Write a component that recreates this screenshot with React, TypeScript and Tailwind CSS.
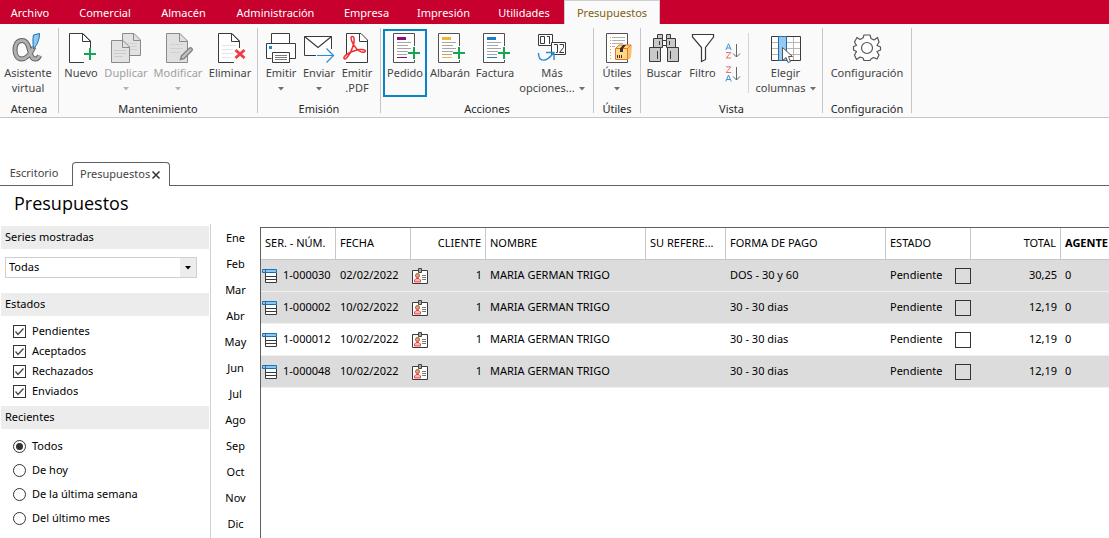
import { useState } from "react";
import type { ReactNode } from "react";

const menu = [
  { name: "Comercial", width: "w-[82px]" },
  { name: "Almacén", width: "w-[75px]" },
  { name: "Administración", width: "w-[109px]" },
  { name: "Empresa", width: "w-[73px]" },
  { name: "Impresión", width: "w-[81px]" },
  { name: "Utilidades", width: "w-[80px]" },
];
const months = ["Ene", "Feb", "Mar", "Abr", "May", "Jun", "Jul", "Ago", "Sep", "Oct", "Nov", "Dic"];
const rows = [
  { num: "1-000030", date: "02/02/2022", pay: "DOS - 30 y 60", total: "30,25", dark: true },
  { num: "1-000002", date: "10/02/2022", pay: "30 - 30 dias", total: "12,19", dark: true },
  { num: "1-000012", date: "10/02/2022", pay: "30 - 30 dias", total: "12,19", dark: false },
  { num: "1-000048", date: "10/02/2022", pay: "30 - 30 dias", total: "12,19", dark: true },
];

const Icon = ({ children }: { children: ReactNode }) => (
  <svg width="32" height="32" viewBox="0 0 32 32" fill="none" className="block shrink-0">
    {children}
  </svg>
);

const alphaBowl = "M10 7.500C14.500 7.500 16 11 17 15.500L19 22C20.500 27 25.500 27.500 27.500 22.500M10 7.500C5 7.500 3 12 3 17C3 22 5.500 26 9.500 26C14.500 26 19 20 22 14";

const AlphaIcon = () => (
  <Icon>
    <path d={alphaBowl} stroke="#626262" strokeWidth="5" />
    <path d={alphaBowl} stroke="#b0b0b0" strokeWidth="3" />
    <path d="M21.500 2L27.500 .5C27.500 7 25 12 21.500 16C21 11 20.500 6 21.500 2Z" fill="#8cc8f2" stroke="#1c6fb0" />
  </Icon>
);

const NewIcon = () => (
  <Icon>
    <path d="M19 29.500H4.500V.5H18L25.500 8V18" fill="#fff" stroke="#3a3a3a" />
    <path d="M17.500 .5V8.500H25.500Z" fill="#fff" stroke="#3a3a3a" />
    <path d="M25 15V27M19 21H31" stroke="#17a552" strokeWidth="2" />
  </Icon>
);

const CopyIcon = () => (
  <Icon>
    <path d="M12.500 .5H24L30.500 7V22.500H12.500Z" fill="#e2e2e2" stroke="#8a8a8a" />
    <path d="M23.500 .5V7.500H30.500" stroke="#8a8a8a" />
    <path d="M15 10.500H27M15 13.500H27M15 16.500H27" stroke="#d0d0d0" />
    <path d="M1.500 7.500H13L19.500 14V29.500H1.500Z" fill="#e2e2e2" stroke="#8a8a8a" />
    <path d="M12.500 7.500V14.500H19.500" stroke="#8a8a8a" />
    <path d="M4 17.500H16M4 20.500H16M4 23.500H13" stroke="#cbcbcb" />
  </Icon>
);

const EditIcon = () => (
  <Icon>
    <path d="M4.500 .5H18L25.500 8V29.500H4.500Z" fill="#e0e0e0" stroke="#8a8a8a" />
    <path d="M17.500 .5V8.500H25.500" stroke="#8a8a8a" />
    <path d="M8 11.500H21M8 15.500H21M8 19.500H18" stroke="#d0d0d0" />
    <path d="M18.500 26.500L19.500 23L27.500 15C29 14 31 16 30 17.500L22 25.500Z" fill="#c4c4c4" stroke="#858585" strokeWidth="1.500" />
  </Icon>
);

const DeleteIcon = () => (
  <Icon>
    <path d="M20 29.500H4.500V.5H18L25.500 8V15" fill="#fff" stroke="#3a3a3a" />
    <path d="M17.500 .5V8.500H25.500Z" fill="#fff" stroke="#3a3a3a" />
    <path d="M8 12.500H22M8 16.500H19M8 20.500H19M8 24.500H17" stroke="#e4e4e4" />
    <path d="M21.500 17L30.500 25M30.500 17L21.500 25" stroke="#ef3e42" strokeWidth="3" />
  </Icon>
);

const PrinterIcon = () => (
  <Icon>
    <path d="M6.500 10.500V.5H24.500V10.500" fill="#fff" stroke="#3a3a3a" />
    <path d="M6.500 25.500H1.500V10.500H30.500V25.500H24.500" fill="#fff" stroke="#3a3a3a" />
    <path d="M7.500 19.500H24.500V29.500H7.500Z" fill="#fff" stroke="#3a3a3a" />
    <path d="M10 22.500H22M10 24.500H22M10 26.500H22" stroke="#777" />
    <path d="M4 13H7V16H4Z" fill="#2186cf" />
  </Icon>
);

const MailIcon = () => (
  <Icon>
    <path d="M13 22.500H1.500V3.500H28.500V16" fill="#fff" stroke="#3a3a3a" />
    <path d="M1.500 3.500L15 14.500L28.500 3.500" stroke="#3a3a3a" strokeWidth="1.200" />
    <path d="M14 22.500H30M23.500 15.500L30.500 22.500L23.500 29.500" stroke="#2a8bd3" strokeWidth="1.200" />
  </Icon>
);

const PdfIcon = () => (
  <Icon>
    <path d="M5 29.500H26.500V7L20 .5H5.500V21" fill="#fff" stroke="#3a3a3a" />
    <path d="M18.500 .5V8.500H26.500" stroke="#3a3a3a" />
    <path d="M11 3.500C13.500 3 13.500 8 12.500 11.500C11 16.500 8 22.500 5.500 25C3.500 27 2 25.500 3.500 23.500C6 20.500 13 17.500 18.500 16.500C24 16 25.500 18 23.500 19C21 20 17 17.500 14.500 14.500C11.500 11 8.500 4.500 11 3.500Z" stroke="#f02f32" strokeWidth="1.500" />
  </Icon>
);

const DocIcon = ({ color }: { color: string }) => (
  <Icon>
    <path d="M25.500 13V.5H4.500V29.500H25.500V27" fill="#fff" stroke="#505050" />
    <path d="M8 4H17V7H8Z" fill={color} />
    <path d="M8 9.500H22M8 12.500H19M8 15.500H22M8 18.500H19M8 21.500H18" stroke="#a5a5a5" />
    <path d="M8 24.500H18" stroke={color} />
    <path d="M25 14V26M19 20H31" stroke="#17a552" strokeWidth="2" />
  </Icon>
);

const NumbersIcon = () => (
  <Icon>
    <path d="M2.500 1.500H16.500V12.500H2.500Z" fill="#fff" stroke="#3a3a3a" />
    <path d="M4.500 3.500H8.500V10.500H4.500ZM11 3.500H13.500V11" stroke="#3a3a3a" />
    <path d="M15.500 9.500H29.500V21.500H15.500Z" fill="#fff" stroke="#3a3a3a" />
    <path d="M18 11.500H21.500V19.500H20M23.500 11.500H27.500V14.500L23.500 19.500H28" stroke="#3a3a3a" />
    <path d="M2.500 20C2.500 29 10 30 17.500 20M10 19.500H18V27" stroke="#2a8bd3" strokeWidth="1.400" />
  </Icon>
);

const ToolsIcon = () => (
  <Icon>
    <path d="M5.500 .5H26.500V29.500H5.500Z" fill="#fff" stroke="#505050" />
    <path d="M11 4.500H24M11 7.500H24M11 10.500H22M11 13.500H14" stroke="#b0b0b0" />
    <path d="M9.500 4V27" stroke="#f19a26" strokeDasharray="1 2" />
    <path d="M14.500 15.500L18 12H30L29.500 24L26.500 26.500H14.500Z" fill="#ffd889" stroke="#e8761f" />
    <path d="M26.500 15.500L30 12V24L26.500 26.500Z" fill="#fbc06a" />
    <path d="M14.500 15.500H26.500V26.500M26.500 15.500L30 12" stroke="#e8761f" />
    <path d="M19 15.500L22 12H25L22 15.500V19H19Z" fill="#333" />
    <path d="M16.500 22V25M18.500 22V25M20.500 22V25" stroke="#333" />
  </Icon>
);

const BinocularsIcon = () => (
  <Icon>
    <g fill="#c9c9c9" stroke="#3a3a3a">
      <path d="M9.500 1.500H14.500V5.500H9.500ZM18.500 1.500H22.500V5.500H18.500Z" />
      <path d="M5.500 5.500H14.500V14.500H5.500ZM18.500 5.500H27.500V14.500H18.500Z" />
      <path d="M14.500 7.500H18.500V12.500H14.500Z" fill="#fff" />
      <path d="M1.500 14.500H12.500V28.500H1.500ZM19.500 14.500H30.500V28.500H19.500Z" />
      <path d="M9.500 18V26M22.500 18V26M11.500 8V12M21.500 8V12" />
    </g>
  </Icon>
);

const FunnelIcon = () => (
  <Icon>
    <path d="M5.500 1.500H26.500V4L18.500 14.500V26.500L14.500 28.500V14.500L5.500 4Z" fill="#fff" stroke="#3a3a3a" strokeWidth="1.200" />
  </Icon>
);

const ColumnsIcon = () => (
  <Icon>
    <path d="M1.500 3.500H30.500V27.500H1.500Z" fill="#fff" stroke="#3a3a3a" />
    <path d="M2 9.500H30M2 15.500H30M2 21.500H30M23.500 4V27" stroke="#b5b5b5" />
    <path d="M8.500 3.500H16.500V27.500H8.500Z" fill="#95c9f0" stroke="#1c6fb0" />
    <path d="M12.500 14.500L22.500 23.500H18.500L20.500 28.500L18 29.500L16 24.500L12.500 27.500Z" fill="#fff" stroke="#555" />
  </Icon>
);

const GearIcon = () => (
  <Icon>
    <path d="M12 5L13 2H19L20 5.500L23 7L26.500 4.500L28 9L26 12.500L29.500 14V17L26 18.500L28 22L26 26L22.500 24.500L20 26L19 27.500H13L12 25L9 24L5.500 26.500L3.500 22L5.500 18.500L2.500 17V13.500L5.500 12.500L3.500 9L6 4.500L9 6.500Z" fill="#fff" stroke="#555" strokeWidth="1.200" strokeLinejoin="round" />
    <circle cx="16" cy="15" r="5.500" fill="#fff" stroke="#555" strokeWidth="1.200" />
  </Icon>
);

const SortIcon = ({ desc }: { desc?: boolean }) => (
  <svg width="16" height="16" viewBox="0 0 16 16" fill="none" className="block">
    <path d={desc ? "M.8 15.500L3.500 9L6.200 15.500M1.800 13.500H5.200" : "M.8 7L3.500 .8L6.200 7M1.800 5H5.200"} stroke="#3f97d3" />
    <path d={desc ? "M1 .8H5.800L1.200 6.500H6.200" : "M1 9.500H5.800L1.200 15H6.200"} stroke="#ee6c70" />
    <path d="M11.500 1V14M8 10.500L11.500 14L15 10.500" stroke="#666" />
  </svg>
);

const RowIcon = () => (
  <svg width="16" height="14" viewBox="0 0 16 14" fill="none" className="block shrink-0">
    <path d="M3.500 4V13.500H14.500V4M4 7.500H14M4 10.500H14" stroke="#3a3a3a" fill="#fff" />
    <path d="M.5 .5H14.500V3.500H.5ZM3.500 .5V3.500" fill="#8cc8f2" stroke="#1c6fb0" />
  </svg>
);

const CardIcon = () => (
  <svg width="16" height="16" viewBox="0 0 16 16" fill="none" className="block shrink-0">
    <path d="M.5 2.500H15.500V15.500H.5Z" fill="#fff" stroke="#3a3a3a" />
    <path d="M6.500 .5H9.500V4.500H6.500Z" fill="#aaa" stroke="#444" />
    <path d="M2.500 14V12L4 10.500H7L8.500 12V14Z" fill="#ffb5b8" stroke="#e6484d" />
    <circle cx="5.500" cy="7.500" r="2" fill="#e5a07a" stroke="#a65a2e" />
    <path d="M10 7.500H14M10 9.500H14M10 11.500H14" stroke="#777" />
  </svg>
);

const Caret = ({ light }: { light?: boolean }) => (
  <svg width="6" height="4" viewBox="0 0 6 4" className="mt-0.5 inline-block shrink-0">
    <path d="M0 0H6L3 3.500Z" fill={light ? "#b5b5b5" : "#707070"} />
  </svg>
);

type ToolProps = {
  icon: ReactNode;
  label: string;
  second?: string;
  caret?: boolean;
  width: string;
  disabled?: boolean;
  active?: boolean;
};

const Tool = ({ icon, label, second, caret, width, disabled, active }: ToolProps) => (
  <button
    type="button"
    disabled={disabled}
    className={`flex h-[68px] shrink-0 flex-col items-center border-2 pt-0.5 leading-[15px] whitespace-nowrap ${width} ${
      active ? "border-[#0a84c8]" : "border-transparent"
    } ${disabled ? "text-[#a0a0a0]" : "text-[#444]"}`}
  >
    {icon}
    <span>{label}</span>
    {(second || caret) && (
      <span className="flex h-[15px] items-center justify-center gap-1">
        {second}
        {caret && <Caret light={disabled} />}
      </span>
    )}
  </button>
);

const Group = ({ name, width, children }: { name: string; width: string; children: ReactNode }) => (
  <>
    <div className={`flex shrink-0 flex-col items-center pt-[5px] pb-px ${width}`}>
      <div className="flex">{children}</div>
      <div className="mt-1 leading-[15px] text-[#262626]">{name}</div>
    </div>
    <div className="mt-1 h-[85px] w-px shrink-0 bg-[#c6c6c6]" />
  </>
);

const Heading = ({ children }: { children: ReactNode }) => (
  <h2 className="ml-px flex h-[23px] items-center bg-[#ececec] pl-1">{children}</h2>
);

const App = () => {
  const [states, setStates] = useState(["Pendientes", "Aceptados", "Rechazados", "Enviados"]);
  const [recent, setRecent] = useState("Todos");
  const toggle = (name: string) =>
    setStates(states.includes(name) ? states.filter((s) => s !== name) : [...states, name]);

  return (
    <div className="flex h-screen w-full flex-col overflow-hidden bg-white font-['Noto_Sans',sans-serif] text-[11px] text-black">
      <nav className="flex h-6 shrink-0 bg-[#c8002d] text-white">
        <button type="button" className="h-[25px] w-16 shrink-0 bg-[#c8002d] pr-1 pt-0.5">
          Archivo
        </button>
        {menu.map((m) => (
          <button key={m.name} type="button" className={`shrink-0 pt-0.5 text-center ${m.width}`}>
            {m.name}
          </button>
        ))}
        <button type="button" className="h-[25px] w-24 shrink-0 border border-b-0 border-[#d0d0d0] bg-[#fafafa] text-[#7d5f12]">
          Presupuestos
        </button>
      </nav>

      <div className="flex shrink-0 border-b border-[#c6c6c6] bg-[#fafafa]">
        <Group name="Atenea" width="w-[58px]">
          <Tool icon={<AlphaIcon />} label="Asistente" second="virtual" width="mr-0.5 w-14" />
        </Group>
        <Group name="Mantenimiento" width="w-[198px]">
          <Tool icon={<NewIcon />} label="Nuevo" width="w-10" />
          <Tool icon={<CopyIcon />} label="Duplicar" caret disabled width="w-[50px]" />
          <Tool icon={<EditIcon />} label="Modificar" caret disabled width="w-[54px]" />
          <Tool icon={<DeleteIcon />} label="Eliminar" width="w-[50px]" />
        </Group>
        <Group name="Emisión" width="w-[122px]">
          <Tool icon={<PrinterIcon />} label="Emitir" caret width="w-[38px]" />
          <Tool icon={<MailIcon />} label="Enviar" caret width="w-[38px]" />
          <Tool icon={<PdfIcon />} label="Emitir" second=".PDF" width="w-[38px]" />
        </Group>
        <Group name="Acciones" width="w-[212px]">
          <Tool icon={<DocIcon color="#8c0b7d" />} label="Pedido" active width="w-11" />
          <Tool icon={<DocIcon color="#fbb034" />} label="Albarán" width="w-[46px]" />
          <Tool icon={<DocIcon color="#1b7fc4" />} label="Factura" width="w-11" />
          <Tool icon={<NumbersIcon />} label="Más" second="opciones..." caret width="mr-1 w-[70px]" />
        </Group>
        <Group name="Útiles" width="w-[46px]">
          <Tool icon={<ToolsIcon />} label="Útiles" caret width="w-10" />
        </Group>
        <Group name="Vista" width="w-[181px]">
          <Tool icon={<BinocularsIcon />} label="Buscar" width="w-[46px]" />
          <Tool icon={<FunnelIcon />} label="Filtro" width="w-[31px]" />
          <div className="flex w-[30px] flex-col items-center gap-[7px] pt-3.5">
            <button type="button" aria-label="Orden ascendente">
              <SortIcon />
            </button>
            <button type="button" aria-label="Orden descendente">
              <SortIcon desc />
            </button>
          </div>
          <div className="mt-1 h-[60px] w-px bg-[#d5d5d5]" />
          <Tool icon={<ColumnsIcon />} label="Elegir" second="columnas" caret width="w-[73px]" />
        </Group>
        <Group name="Configuración" width="w-[88px]">
          <Tool icon={<GearIcon />} label="Configuración" width="w-[84px]" />
        </Group>
      </div>

      <div className="mt-11 flex h-6 shrink-0 items-end text-[#444]">
        <button type="button" className="h-6 w-[72px] border-b border-[#606060] pr-1">
          Escritorio
        </button>
        <div className="flex h-6 w-[98px] items-center gap-px rounded-t-[4px] border border-b-0 border-[#606060] pl-[7px]">
          <button type="button">Presupuestos</button>
          <button type="button" aria-label="Cerrar">
            <svg width="10" height="10" viewBox="0 0 10 10" className="block">
              <path d="M1.500 1.500L8.500 8.500M8.500 1.500L1.500 8.500" stroke="#333" strokeWidth="1.500" />
            </svg>
          </button>
        </div>
        <div className="h-6 flex-1 border-b border-[#606060]" />
      </div>

      <h1 className="shrink-0 pt-[3px] pb-px pl-3.5 font-['Open_Sans',sans-serif] text-[18px] leading-[28px]">Presupuestos</h1>

      <div className="mt-1.5 flex min-h-0 flex-1">
        <aside className="w-[211px] shrink-0 border-r border-[#d0d0d0] pt-0.5">
          <div className="pr-px">
            <Heading>
              <label htmlFor="series">Series mostradas</label>
            </Heading>
            <div className="relative mt-2 ml-[5px] w-48">
              <select id="series" className="block h-[21px] w-full appearance-none border border-[#cfcfcf] bg-white pl-[3px]">
                <option>Todas</option>
              </select>
              <span className="pointer-events-none absolute inset-y-px right-px flex w-4 items-center justify-center bg-[#ececec]">
                <svg width="6" height="4" viewBox="0 0 6 4">
                  <path d="M0 0H6L3 3.500Z" fill="#000" />
                </svg>
              </span>
            </div>
            <div className="mt-[15px]">
              <Heading>Estados</Heading>
            </div>
            <div className="mt-[5px] ml-[13px]">
              {["Pendientes", "Aceptados", "Rechazados", "Enviados"].map((name) => (
                <label key={name} className="flex h-5 items-center gap-1.5">
                  <span className="grid">
                    <input
                      type="checkbox"
                      checked={states.includes(name)}
                      onChange={() => toggle(name)}
                      className="peer col-start-1 row-start-1 h-[13px] w-[13px] appearance-none border border-[#333] bg-white"
                    />
                    <svg width="13" height="13" viewBox="0 0 13 13" fill="none" className="pointer-events-none invisible col-start-1 row-start-1 peer-checked:visible">
                      <path d="M2.500 6.500L5 9.500L10.500 3.500" stroke="#444" strokeWidth="1.300" />
                    </svg>
                  </span>
                  {name}
                </label>
              ))}
            </div>
            <div className="mt-[5px]">
              <Heading>Recientes</Heading>
            </div>
            <div className="mt-[5px] ml-[13px]">
              {["Todos", "De hoy", "De la última semana", "Del último mes"].map((name) => (
                <label key={name} className="flex h-6 items-center gap-1.5">
                  <input
                    type="radio"
                    name="recent"
                    checked={recent === name}
                    onChange={() => setRecent(name)}
                    className="grid h-[13px] w-[13px] appearance-none place-items-center rounded-full border border-[#333] bg-white before:h-[7px] before:w-[7px] before:rounded-full checked:before:bg-[#333]"
                  />
                  {name}
                </label>
              ))}
            </div>
          </div>
        </aside>

        <div className="flex w-[49px] shrink-0 flex-col pt-px">
          {months.map((m) => (
            <button key={m} type="button" className="h-[26px] shrink-0">
              {m}
            </button>
          ))}
        </div>

        <div className="mt-[3px] min-w-0 flex-1 overflow-hidden border-t border-l border-[#606060]">
          <table className="w-full table-fixed border-separate border-spacing-0 whitespace-nowrap">
            <colgroup>
              <col className="w-[75px]" />
              <col className="w-[75px]" />
              <col className="w-[75px]" />
              <col className="w-[160px]" />
              <col className="w-20" />
              <col className="w-[160px]" />
              <col className="w-[85px]" />
              <col className="w-[90px]" />
              <col />
            </colgroup>
            <thead>
              <tr className="h-8 text-left [&>th]:border-b [&>th]:border-[#c6c6c6] [&>th]:px-1 [&>th]:py-0 [&>th]:font-normal [&>th:not(:last-child)]:border-r">
                <th>SER. - NÚM.</th>
                <th>FECHA</th>
                <th className="text-right">CLIENTE</th>
                <th>NOMBRE</th>
                <th>SU REFERE...</th>
                <th>FORMA DE PAGO</th>
                <th>ESTADO</th>
                <th className="text-right">TOTAL</th>
                <th>
                  <b>AGENTE</b>
                </th>
              </tr>
            </thead>
            <tbody>
              {rows.map((r) => (
                <tr key={r.num} className={`h-8 [&>td]:border-b [&>td]:border-[#f0f0f0] [&>td]:px-1 [&>td]:py-0 ${r.dark ? "bg-[#dcdcdc]" : "bg-white"}`}>
                  <td>
                    <div className="-ml-1 flex items-center gap-[5px] pl-px">
                      <RowIcon />
                      {r.num}
                    </div>
                  </td>
                  <td>{r.date}</td>
                  <td>
                    <div className="-ml-1 flex items-center justify-between pl-px">
                      <CardIcon />1
                    </div>
                  </td>
                  <td>MARIA GERMAN TRIGO</td>
                  <td></td>
                  <td>{r.pay}</td>
                  <td>
                    <div className="-mr-1 flex items-center justify-between">
                      Pendiente
                      <input type="checkbox" aria-label={`Pendiente ${r.num}`} className="h-4 w-4 appearance-none border border-[#333]" />
                    </div>
                  </td>
                  <td className="text-right">{r.total}</td>
                  <td>0</td>
                </tr>
              ))}
            </tbody>
          </table>
        </div>
      </div>
    </div>
  );
};

export default App;
